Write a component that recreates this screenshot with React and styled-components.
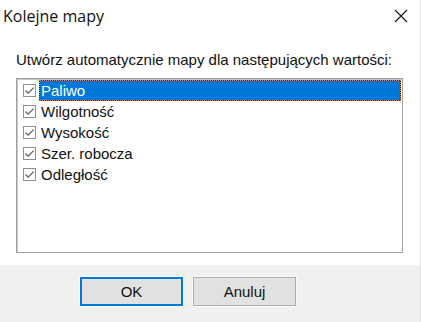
import styled, { createGlobalStyle } from 'styled-components';

const GlobalStyle = createGlobalStyle`
  html, body {
    margin: 0;
    padding: 0;
    background: #ffffff;
  }
`;

const items = ['Paliwo', 'Wilgotność', 'Wysokość', 'Szer. robocza', 'Odległość'];

const App = () => {
  return (
    <>
      <GlobalStyle />
      <Dialog>
        <TitleBar>
          <Title>Kolejne mapy</Title>
          <CloseButton aria-label="Zamknij">
            <svg width="14" height="14" viewBox="0 0 14 14">
              <path d="M1 1 L13 13 M13 1 L1 13" stroke="#111" strokeWidth="1.1" fill="none" />
            </svg>
          </CloseButton>
        </TitleBar>
        <Content>
          <Caption>Utwórz automatycznie mapy dla następujących wartości:</Caption>
          <ListBox>
            {items.map((item, i) => (
              <Row key={item}>
                <CheckBox>
                  <svg width="11" height="11" viewBox="0 0 11 11">
                    <path d="M1.5 5.5 L4.2 8.2 L9.6 2.6" stroke="#5c5c5c" strokeWidth="1.2" fill="none" />
                  </svg>
                </CheckBox>
                <ItemLabel $selected={i === 0}>{item}</ItemLabel>
              </Row>
            ))}
          </ListBox>
        </Content>
        <Footer>
          <Button $default>OK</Button>
          <Button>Anuluj</Button>
        </Footer>
      </Dialog>
    </>
  );
};

export default App;

const Dialog = styled.div`
  width: 420px;
  height: 322px;
  display: flex;
  flex-direction: column;
  border-right: 1px solid #e4e4e4;
  font-family: 'Liberation Sans', Arial, sans-serif;
  color: #000;
`;

const TitleBar = styled.div`
  height: 31px;
  display: flex;
  align-items: center;
  justify-content: space-between;
  padding: 0 12px 0 3px;
`;

const Title = styled.span`
  font-family: 'Open Sans', 'Noto Sans', sans-serif;
  font-size: 16px;
  color: #111;
`;

const CloseButton = styled.span`
  display: flex;
  align-items: center;
  margin-top: 1px;
`;

const Content = styled.div`
  flex: 1;
  padding: 20px 17px 0 16px;
`;

const Caption = styled.div`
  font-size: 15px;
  line-height: 17px;
  margin-bottom: 10px;
  color: #111;
`;

const ListBox = styled.div`
  height: 172px;
  border: 1px solid #a0a0a0;
  box-shadow: inset 1px 1px 0 #c8c8c8;
  padding-top: 1px;
  background: #fff;
`;

const Row = styled.div`
  height: 21px;
  display: flex;
  align-items: center;
  padding-left: 6px;
`;

const CheckBox = styled.span`
  width: 13px;
  height: 13px;
  box-sizing: border-box;
  border: 1px solid #8f8f8f;
  display: flex;
  align-items: center;
  justify-content: center;
  margin-right: 3px;
  background: #fff;
`;

const ItemLabel = styled.span`
  flex: 1;
  height: 21px;
  box-sizing: border-box;
  display: flex;
  align-items: center;
  padding-left: 1px;
  margin-right: 1px;
  font-size: 15px;
  border: 1px solid transparent;
  color: ${(p) => (p.$selected ? '#fff' : '#111')};
  ${(p) =>
    p.$selected &&
    `
    border: 1px dotted #ff8728;
    background: linear-gradient(#0078d7, #0078d7) padding-box,
      linear-gradient(#1e1e1e, #1e1e1e) border-box;
  `}
`;

const Footer = styled.div`
  height: 57px;
  background: #f0f0f0;
  display: flex;
  gap: 10px;
  padding: 12px 0 0 80px;
  box-sizing: border-box;
`;

const Button = styled.div`
  width: 103px;
  height: 29px;
  box-sizing: border-box;
  display: flex;
  align-items: center;
  justify-content: center;
  font-size: 15px;
  color: #111;
  background: #e1e1e1;
  border: ${(p) => (p.$default ? '2px solid #0078d7' : '1px solid #adadad')};
  box-shadow: 0 0 0 1px #fafafa;
`;
